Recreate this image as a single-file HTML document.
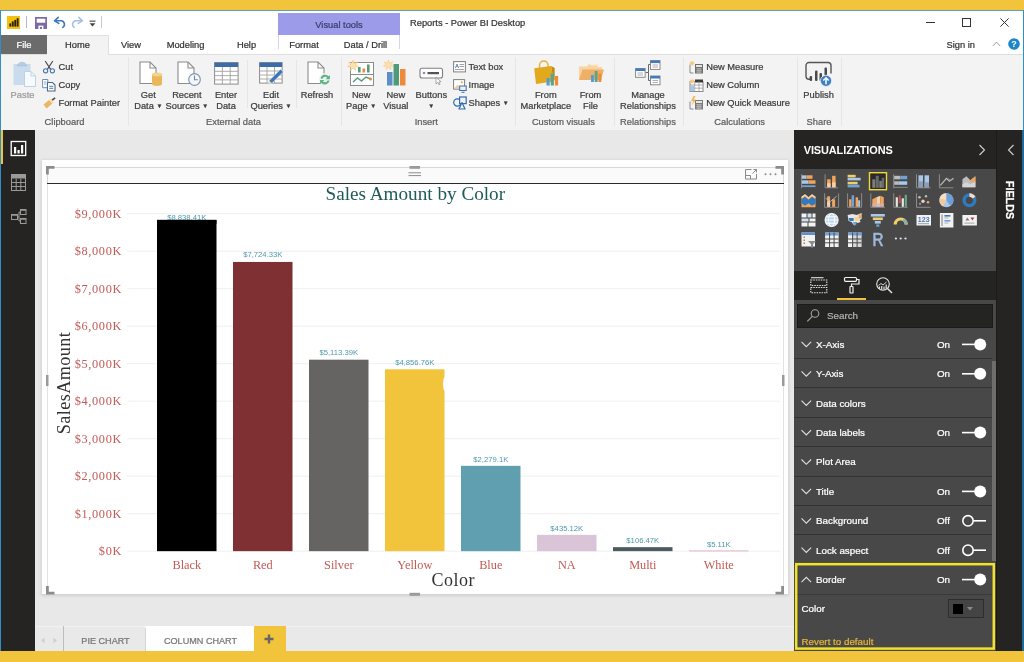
<!DOCTYPE html>
<html lang="en">
<head>
<meta charset="utf-8">
<title>Reports - Power BI Desktop</title>
<style>
*{box-sizing:border-box;margin:0;padding:0}
html,body{width:1024px;height:662px;overflow:hidden;background:#f2c43c}
body{font-family:"Liberation Sans",sans-serif;font-size:9.3px;color:#333;position:relative}
div,span,svg{position:absolute}
.t{white-space:nowrap;line-height:12px;height:12px;-webkit-text-stroke:.22px currentColor}
.c{transform:translateX(-50%);text-align:center}
.sep{width:1px;background:#e6e6e6}
.rt{color:#3b3b3b}
.gl{color:#5c5c5c}
.serif{font-family:"Liberation Serif",serif}
</style>
</head>
<body>
<div id="root" style="left:0;top:0;width:1024px;height:662px;will-change:transform">
<!-- window frame -->
<div id="white" style="left:0;top:10px;width:1024px;height:641px;background:#fff"></div>
<div style="left:0;top:10px;width:1024px;height:1px;background:#5aa0c0"></div>
<div style="left:0;top:10px;width:1.300px;height:641px;background:#2f8fc6"></div>
<div style="left:1022.500px;top:10px;width:1.500px;height:641px;background:#2f8fc6"></div>

<!-- TITLEBAR -->
<!-- TABS -->
<!-- RIBBON -->
<div id="ribbon" style="left:1px;top:54px;width:1022px;height:76px;background:#f3f3f3;border-top:1px solid #dedede"></div>

<!-- title bar content -->
<svg style="left:7px;top:16px" width="13" height="13" viewBox="0 0 13 13"><rect width="13" height="13" fill="#f2c20f"/><rect x="2.300" y="7.400" width="1.900" height="3.200" fill="#2e2103"/><rect x="4.800" y="5.400" width="1.900" height="5.200" fill="#2e2103"/><rect x="7.300" y="3.900" width="1.900" height="6.700" fill="#2e2103"/><rect x="9.700" y="2.200" width="1.900" height="8.400" fill="#2e2103"/></svg>
<div style="left:26px;top:16px;width:1px;height:12px;background:#b9b5d4"></div>
<svg style="left:35px;top:17px" width="12" height="12" viewBox="0 0 12 12"><rect x="0" y="0" width="12" height="12" fill="#7b68a6"/><rect x="1.700" y="1.700" width="8.600" height="4" fill="#fff"/><rect x="3.400" y="8.600" width="5" height="3.400" fill="#fff"/><rect x="4.900" y="9.900" width="2" height="2.100" fill="#7b68a6"/></svg>
<svg style="left:53px;top:16px" width="14" height="13" viewBox="0 0 14 13"><path d="M5.2 1.4L1.6 4.8l4.2 2.6" fill="none" stroke="#3d78b8" stroke-width="1.6" stroke-linecap="round" stroke-linejoin="round"/><path d="M2 4.8h6.2a3.6 3.6 0 0 1 1.6 6.6" fill="none" stroke="#3d78b8" stroke-width="1.6" stroke-linecap="round"/></svg>
<svg style="left:70px;top:16px" width="14" height="13" viewBox="0 0 14 13"><path d="M8.8 1.4l3.6 3.4-4.2 2.6" fill="none" stroke="#a3c0e2" stroke-width="1.5" stroke-linecap="round" stroke-linejoin="round"/><path d="M12 4.8H5.8a3.6 3.6 0 0 0-1.6 6.6" fill="none" stroke="#a3c0e2" stroke-width="1.5" stroke-linecap="round"/></svg>
<svg style="left:89px;top:20px" width="7" height="7" viewBox="0 0 7 7"><rect x="0.5" y="0.6" width="6" height="1.1" fill="#444"/><path d="M0.6 3.2h5.8L3.5 6.4z" fill="#444"/></svg>
<div style="left:101px;top:16px;width:1px;height:12px;background:#c9c9c9"></div>
<div style="left:278px;top:13px;width:122px;height:22px;background:#9b9be9"></div>
<div style="left:278px;top:35px;width:122px;height:13.500px;border-left:1px solid #d4d4f0;border-right:1px solid #d4d4f0;background:#fff"></div>
<span class="t c" style="left:339px;top:19px;color:#3b3b6a">Visual tools</span>
<span class="t" style="left:410px;top:17px;color:#333">Reports - Power BI Desktop</span>
<div style="left:926px;top:22px;width:9px;height:1px;background:#333"></div>
<div style="left:962px;top:18px;width:9px;height:9px;border:1px solid #333"></div>
<svg style="left:1000px;top:18px" width="9" height="9" viewBox="0 0 9 9"><path d="M0.4 0.4l8.2 8.2M8.6 0.4L0.4 8.6" stroke="#333" stroke-width="1"/></svg>
<!-- tab row -->
<div style="left:1px;top:35px;width:46px;height:19px;background:#6b6b6b"></div>
<span class="t c" style="left:24px;top:39px;color:#fff">File</span>
<div style="left:47px;top:35px;width:62px;height:20px;background:#f3f3f3;border:1px solid #e0e0e0;border-bottom:none;border-left:none"></div>
<span class="t c" style="left:77.5px;top:39px;color:#333">Home</span>
<span class="t c" style="left:131px;top:39px;color:#333">View</span>
<span class="t c" style="left:185.5px;top:39px;color:#333">Modeling</span>
<span class="t c" style="left:246.5px;top:39px;color:#333">Help</span>
<span class="t c" style="left:304px;top:39px;color:#333">Format</span>
<span class="t c" style="left:365.5px;top:39px;color:#333">Data / Drill</span>
<span class="t" style="left:946.5px;top:39px;color:#333">Sign in</span>
<svg style="left:992px;top:41px" width="9" height="6" viewBox="0 0 9 6"><path d="M0.8 5L4.5 1.2 8.2 5" fill="none" stroke="#9a9a9a" stroke-width="1"/></svg>
<svg style="left:1008px;top:38px" width="12" height="12" viewBox="0 0 12 12"><circle cx="6" cy="6" r="5.8" fill="#1e86c8"/><text x="6" y="9.3" font-size="9" font-weight="bold" font-family="Liberation Sans,sans-serif" fill="#fff" text-anchor="middle">?</text></svg>
<!-- ribbon content -->
<!-- Clipboard -->
<svg style="left:13px;top:61px" width="24" height="27" viewBox="0 0 24 27"><rect x="0.5" y="3" width="17" height="21" fill="#c9dbec"/><path d="M5 3c0-1 .8-1.6 2-1.600 .3-1 3.700-1 4 0 1.200 0 2 .6 2 1.600z" fill="#b5cce2"/><rect x="4" y="3.400" width="10" height="1.800" fill="#a9c3dc"/><path d="M11.500 10.500h6.500l4.500 4.500v10.500h-11z" fill="#f7fafd" stroke="#bdd2e6" stroke-width="1"/><path d="M18 10.500v4.500h4.500" fill="none" stroke="#bdd2e6" stroke-width="1"/></svg>
<span class="t c" style="left:22.500px;top:89px;color:#9a9a9a">Paste</span>
<svg style="left:42px;top:60px" width="14" height="14" viewBox="0 0 14 14"><path d="M3.200 1l5.600 8.600M10.800 1L5.200 9.600" stroke="#4f4f4f" stroke-width="1.200" fill="none"/><circle cx="3.600" cy="10.800" r="2.100" fill="none" stroke="#4878b0" stroke-width="1.100"/><circle cx="10.400" cy="10.800" r="2.100" fill="none" stroke="#4878b0" stroke-width="1.100"/></svg>
<span class="t rt" style="left:58.500px;top:61px">Cut</span>
<svg style="left:42px;top:78px" width="14" height="14" viewBox="0 0 14 14"><path d="M.6 1.500h5.200v8.200H.6z" fill="#fff" stroke="#6f8fb0" stroke-width="1"/><path d="M2 4h2.400M2 6h2.400" stroke="#6f8fb0" stroke-width=".8"/><path d="M5.500 4.500h5l2.500 2.500v6h-7.500z" fill="#fff" stroke="#48698c" stroke-width="1.100"/><path d="M7.300 8.300h4M7.300 10.300h4" stroke="#48698c" stroke-width=".9"/></svg>
<span class="t rt" style="left:58.500px;top:79px">Copy</span>
<svg style="left:42px;top:96px" width="15" height="14" viewBox="0 0 15 14"><path d="M1.500 8.500L7 4l3.200 3.800-5.700 4.600z" fill="#ecb667"/><path d="M7 4l1.600-1.300 3.200 3.800-1.600 1.300z" fill="#f4d9a8"/><path d="M9.600 3.600l3-2.400 1 1.200-3 2.400z" fill="#4a4a4a"/></svg>
<span class="t rt" style="left:58.500px;top:97px">Format Painter</span>
<span class="t c gl" style="left:64.500px;top:115.700px">Clipboard</span>
<div class="sep" style="left:128px;top:57px;height:69px"></div>
<!-- External data -->
<svg style="left:139px;top:61px" width="24" height="26" viewBox="0 0 24 26"><path d="M1 1h10l6 6v15.500H1z" fill="#fff" stroke="#8c8c8c" stroke-width="1.100"/><path d="M11 1v6h6" fill="none" stroke="#8c8c8c" stroke-width="1.100"/><path d="M13 13.500v9.500c0 1.300 2.200 2 5 2s5-.7 5-2v-9.500z" fill="#e9b85a"/><ellipse cx="18" cy="13.500" rx="5" ry="1.900" fill="#f3d28c"/></svg>
<span class="t c rt" style="left:148.300px;top:89px">Get</span>
<span class="t c rt" style="left:148.300px;top:99.600px">Data <span style="position:static;font-size:6px;vertical-align:1px">&#9660;</span></span>
<svg style="left:177px;top:61px" width="25" height="26" viewBox="0 0 25 26"><path d="M1 1h10l6 6v15.500H1z" fill="#fff" stroke="#8c8c8c" stroke-width="1.100"/><path d="M11 1v6h6" fill="none" stroke="#8c8c8c" stroke-width="1.100"/><circle cx="17.500" cy="18.500" r="5.800" fill="#f6f8fb" stroke="#8097b2" stroke-width="1.200"/><path d="M17.500 14.500v4.200h3.300" fill="none" stroke="#6f88a6" stroke-width="1.100"/></svg>
<span class="t c rt" style="left:186.900px;top:89px">Recent</span>
<span class="t c rt" style="left:186.900px;top:99.600px">Sources <span style="position:static;font-size:6px;vertical-align:1px">&#9660;</span></span>
<svg style="left:214px;top:62px" width="25" height="23" viewBox="0 0 25 23"><rect x=".6" y=".6" width="23.500" height="21.500" fill="#fff" stroke="#8c8c8c" stroke-width="1"/><rect x=".6" y=".6" width="23.500" height="4.400" fill="#3d6da6"/><path d="M.6 9.300h23.500M.6 13.600h23.500M.6 17.900h23.500M8.400 5v17M16.200 5v17" stroke="#a2a2a2" stroke-width=".9"/></svg>
<span class="t c rt" style="left:226px;top:89px">Enter</span>
<span class="t c rt" style="left:226px;top:99.600px">Data</span>
<div class="sep" style="left:247px;top:60px;height:48px"></div>
<svg style="left:259px;top:62px" width="26" height="25" viewBox="0 0 26 25"><rect x=".6" y=".6" width="22.500" height="20.500" fill="#fff" stroke="#8c8c8c" stroke-width="1"/><rect x=".6" y=".6" width="22.500" height="4.400" fill="#3d6da6"/><path d="M.6 9h22.500M.6 13h22.500M.6 17h22.500M8 5v16M15.500 5v16" stroke="#a2a2a2" stroke-width=".9"/><path d="M9 22.500l1.200-4L21.500 7.200l2.800 2.800L13 21.300z" fill="#3e76ba" stroke="#f3f3f3" stroke-width=".6"/><path d="M9 22.500l1.200-4 2.800 2.800z" fill="#f0d9a8"/></svg>
<span class="t c rt" style="left:271px;top:89px">Edit</span>
<span class="t c rt" style="left:271px;top:99.600px">Queries <span style="position:static;font-size:6px;vertical-align:1px">&#9660;</span></span>
<div class="sep" style="left:296px;top:60px;height:48px"></div>
<svg style="left:307px;top:61px" width="25" height="26" viewBox="0 0 25 26"><path d="M1 1h10l6 6v15.500H1z" fill="#fff" stroke="#8c8c8c" stroke-width="1.100"/><path d="M11 1v6h6" fill="none" stroke="#8c8c8c" stroke-width="1.100"/><circle cx="18" cy="18.500" r="6.300" fill="#f3f3f3"/><path d="M13.400 17.500a4.800 4.800 0 0 1 8.200-2.300l1.300-1.300v4.300h-4.300l1.500-1.500a2.800 2.800 0 0 0-4.600 1z" fill="#5cb585"/><path d="M22.600 19.600a4.800 4.800 0 0 1-8.200 2.300l-1.300 1.300v-4.300h4.300l-1.500 1.500a2.800 2.800 0 0 0 4.600-1z" fill="#5cb585"/></svg>
<span class="t c rt" style="left:317px;top:89px">Refresh</span>
<span class="t c gl" style="left:233.500px;top:115.700px">External data</span>
<div class="sep" style="left:341px;top:57px;height:69px"></div>
<!-- Insert -->
<svg style="left:347px;top:59px" width="28" height="28" viewBox="0 0 28 28"><rect x="3.500" y="3.500" width="23" height="23" fill="#fff" stroke="#8c8c8c" stroke-width="1"/><path d="M3.500 15.500h23" stroke="#8c8c8c" stroke-width="1"/><rect x="11" y="8" width="2.600" height="5.500" fill="#5a9a78"/><rect x="15.500" y="9.500" width="2.600" height="4" fill="#ee8a3c"/><rect x="20" y="5.500" width="2.600" height="8" fill="#5a9a78"/><path d="M6 23l4.500-4 4 3 4.500-4 4.500 2" fill="none" stroke="#5a9a78" stroke-width="1.400"/><circle cx="23.500" cy="20" r="1.500" fill="#ee8a3c"/><path d="M6 1l1.200 3.200L10.500 3 8.600 5.800 11.500 7.500 8.200 8 8.500 11.500 6 9 3.500 11.500 3.800 8 .5 7.500 3.400 5.800 1.500 3 4.800 4.200z" fill="#fbe0b0" stroke="#f3c27a" stroke-width=".5"/></svg>
<span class="t c rt" style="left:361.200px;top:89px">New</span>
<span class="t c rt" style="left:361.200px;top:99.600px">Page <span style="position:static;font-size:6px;vertical-align:1px">&#9660;</span></span>
<svg style="left:383px;top:59px" width="24" height="28" viewBox="0 0 24 28"><rect x="4" y="13" width="5.500" height="13.500" fill="#5b8fc9"/><rect x="10.500" y="5" width="5.500" height="21.500" fill="#4e9a7a"/><rect x="17" y="10" width="5.500" height="16.500" fill="#ee8a3c"/><path d="M5.500 1l1.100 3L9.700 2.900 8 5.500 10.600 7 7.600 7.500 7.900 10.700 5.500 8.400 3.100 10.700 3.400 7.500 .4 7 3 5.500 1.300 2.900 4.400 4z" fill="#fbe0b0" stroke="#f3c27a" stroke-width=".5"/></svg>
<span class="t c rt" style="left:395.800px;top:89px">New</span>
<span class="t c rt" style="left:395.800px;top:99.600px">Visual</span>
<svg style="left:419px;top:67px" width="26" height="18" viewBox="0 0 26 18"><rect x="1" y="1.200" width="22.500" height="9.800" rx="2" fill="#fff" stroke="#7f7f7f" stroke-width="1.100"/><circle cx="5" cy="6" r="1.300" fill="#7f95b5"/><rect x="8.500" y="5" width="11.500" height="2.200" fill="#555"/><path d="M17 10.500l0 6.500 1.800-1.600 1.300 2.400 1-.5-1.300-2.300 2.300-.3z" fill="#fff" stroke="#8a8a8a" stroke-width=".7"/></svg>
<span class="t c rt" style="left:431.300px;top:89px">Buttons</span>
<span class="t c rt" style="left:431.300px;top:99.600px;font-size:6px">&#9660;</span>
<svg style="left:453px;top:61px" width="13" height="12" viewBox="0 0 13 12"><rect x=".6" y=".6" width="11.800" height="10.300" fill="#fff" stroke="#7f7f7f" stroke-width="1"/><text x="2" y="6.500" font-size="5.500" font-weight="bold" font-family="Liberation Sans,sans-serif" fill="#3d6da6">A</text><path d="M6.500 3.500h4.500M6.500 5.500h4.500M2 8.500h9" stroke="#8a8a8a" stroke-width=".8"/></svg>
<span class="t rt" style="left:468.600px;top:61px">Text box</span>
<svg style="left:453px;top:79px" width="14" height="14" viewBox="0 0 14 14"><rect x=".6" y=".6" width="11" height="9.500" fill="#fff" stroke="#7f7f7f" stroke-width="1"/><path d="M1.500 9l3-3.500 2.500 2.500 1.500-1.500 2.500 2.500z" fill="#f3c9a0"/><circle cx="8.800" cy="3.300" r="1.100" fill="#f0a848"/><rect x="6.700" y="7" width="6.500" height="4.500" fill="#e8f0fa" stroke="#3d6da6" stroke-width="1"/><path d="M8.500 13.300h3" stroke="#3d6da6" stroke-width="1"/></svg>
<span class="t rt" style="left:468.600px;top:79px">Image</span>
<svg style="left:453px;top:96px" width="14" height="14" viewBox="0 0 14 14"><circle cx="4.300" cy="6.500" r="3.600" fill="#f3f3f3" stroke="#2f6cb0" stroke-width="1.200"/><rect x="6.600" y="1" width="6.600" height="6.600" fill="#f3f3f3" stroke="#2f6cb0" stroke-width="1.200"/><path d="M9 6.500l3 6.500H6z" fill="#f3f3f3" stroke="#2f6cb0" stroke-width="1.200" stroke-linejoin="round"/></svg>
<span class="t rt" style="left:468.600px;top:97px">Shapes <span style="position:static;font-size:6px;vertical-align:1px">&#9660;</span></span>
<span class="t c gl" style="left:426.300px;top:115.700px">Insert</span>
<div class="sep" style="left:515px;top:57px;height:69px"></div>
<!-- Custom visuals -->
<svg style="left:533px;top:59px" width="27" height="29" viewBox="0 0 27 29"><path d="M6.500 9.500V6.200a4.300 4.300 0 0 1 8.600 0V9.500" fill="none" stroke="#e6b43a" stroke-width="1.500"/><path d="M1.200 9.300l17-2.300 2.300 15.500L3 25z" fill="#e2a91c"/><path d="M18.200 7l2.300 15.500 1.200-1.700V9z" fill="#c28c10"/><rect x="13.500" y="19" width="3.200" height="7.500" fill="#5b9bd5"/><rect x="17.700" y="14.500" width="3.200" height="12" fill="#5aa587"/><rect x="21.900" y="17" width="3.200" height="9.500" fill="#ee8a3c"/></svg>
<span class="t c rt" style="left:545.800px;top:89px">From</span>
<span class="t c rt" style="left:545.800px;top:99.600px">Marketplace</span>
<svg style="left:578px;top:63px" width="27" height="21" viewBox="0 0 27 21"><path d="M1 3.500h8l2-2.500h9.500v3H24v13H1z" fill="#f6d5a2"/><path d="M1 17l3.500-10.500H26L23 17z" fill="#eeb065"/><path d="M12 1.800h8v2" fill="none" stroke="#fff" stroke-width=".8"/><rect x="13" y="12" width="2.900" height="7" fill="#5b9bd5"/><rect x="16.700" y="8" width="2.900" height="11" fill="#5aa587"/><rect x="20.400" y="10.500" width="2.900" height="8.500" fill="#ee8a3c"/></svg>
<span class="t c rt" style="left:590.500px;top:89px">From</span>
<span class="t c rt" style="left:590.500px;top:99.600px">File</span>
<span class="t c gl" style="left:563.400px;top:115.700px">Custom visuals</span>
<div class="sep" style="left:614px;top:57px;height:69px"></div>
<!-- Relationships -->
<svg style="left:635px;top:60px" width="26" height="26" viewBox="0 0 26 26"><path d="M10.500 12.500h3v-8h3M13.500 12.500v8h3" fill="none" stroke="#6a6a6a" stroke-width="1"/><rect x="15.500" y=".6" width="9.500" height="8.800" fill="#fff" stroke="#7f7f7f" stroke-width=".9"/><rect x="15.500" y=".6" width="9.500" height="2.500" fill="#3d7cc2"/><path d="M17.500 5h5.500M17.500 7h5.500" stroke="#9a9a9a" stroke-width=".8"/><rect x=".6" y="8.500" width="9.500" height="8.800" fill="#fff" stroke="#7f7f7f" stroke-width=".9"/><rect x=".6" y="8.500" width="9.500" height="2.500" fill="#3d7cc2"/><path d="M2.500 13h5.500M2.500 15h5.500" stroke="#9a9a9a" stroke-width=".8"/><rect x="15.500" y="16" width="9.500" height="8.800" fill="#fff" stroke="#7f7f7f" stroke-width=".9"/><rect x="15.500" y="16" width="9.500" height="2.500" fill="#3d7cc2"/><path d="M17.500 20.500h5.500M17.500 22.500h5.500" stroke="#9a9a9a" stroke-width=".8"/></svg>
<span class="t c rt" style="left:648px;top:89px">Manage</span>
<span class="t c rt" style="left:648px;top:99.600px">Relationships</span>
<span class="t c gl" style="left:648px;top:115.700px">Relationships</span>
<div class="sep" style="left:683px;top:57px;height:69px"></div>
<!-- Calculations -->
<svg style="left:689px;top:60px" width="15" height="14" viewBox="0 0 15 14"><path d="M1 4.500v8.500h3.500" fill="none" stroke="#8a8a8a" stroke-width="1"/><rect x="6" y="4" width="8" height="9.500" fill="#6f6f6f"/><rect x="7" y="5" width="6" height="2" fill="#e6e6e6"/><path d="M7.200 8.700h5.600M7.200 10.400h5.600M7.200 12.100h5.600M9 8v5M11 8v5" stroke="#d0d0d0" stroke-width=".6"/><path d="M3 .3l.7 1.700 1.800-.5-1 1.500 1.500 1-1.800 .3.200 1.800L3 4.800 1.600 6.100l.2-1.800L0 4l1.500-1-1-1.500 1.800 .5z" fill="#f7c879"/></svg>
<span class="t rt" style="left:706.200px;top:61px">New Measure</span>
<svg style="left:689px;top:78px" width="15" height="14" viewBox="0 0 15 14"><rect x="1" y="3.500" width="13" height="10" fill="#fff" stroke="#8a8a8a" stroke-width="1"/><rect x="6" y="1.500" width="8" height="3" fill="#3a3a3a"/><path d="M1 7h13M1 10.200h13M5.700 3.500v10M10 3.500v10" stroke="#9a9a9a" stroke-width=".8"/><rect x="1.500" y="7.500" width="4" height="5.700" fill="#a9c6e6"/><path d="M3 .3l.7 1.700 1.800-.5-1 1.500 1.500 1-1.800 .3.200 1.800L3 4.800 1.600 6.100l.2-1.800L0 4l1.500-1-1-1.500 1.800 .5z" fill="#f7c879"/></svg>
<span class="t rt" style="left:706.200px;top:79px">New Column</span>
<svg style="left:689px;top:96px" width="15" height="14" viewBox="0 0 15 14"><path d="M1 5.500v7.500h3.500" fill="none" stroke="#8a8a8a" stroke-width="1"/><rect x="6" y="4" width="8" height="9.500" fill="#7a7a7a"/><rect x="7" y="5" width="6" height="2" fill="#e6e6e6"/><path d="M7.200 8.700h5.600M7.200 10.400h5.600M7.200 12.100h5.600M9 8v5M11 8v5" stroke="#d0d0d0" stroke-width=".6"/><path d="M4.500 0L2 5h2L3 9l4-5.500H4.800L6.500 0z" fill="#f2b95c"/></svg>
<span class="t rt" style="left:706.200px;top:97px">New Quick Measure</span>
<span class="t c gl" style="left:739.700px;top:115.700px">Calculations</span>
<div class="sep" style="left:797px;top:57px;height:69px"></div>
<!-- Share -->
<svg style="left:805px;top:61px" width="28" height="28" viewBox="0 0 28 28"><path d="M5 18.200H4a3 3 0 0 1-3-3V4.500a3 3 0 0 1 3-3h19a3 3 0 0 1 3 3V12.500" fill="none" stroke="#555" stroke-width="1.400"/><rect x="4.600" y="15" width="2.500" height="5" rx="1" fill="#4a4a4a"/><rect x="10" y="9.600" width="2.500" height="10.400" rx="1" fill="#4a4a4a"/><rect x="14.500" y="11.900" width="2.500" height="8.100" rx="1" fill="#4a4a4a"/><rect x="19.500" y="6.400" width="2.500" height="11" rx="1" fill="#4a4a4a"/><circle cx="21" cy="19.800" r="5.600" fill="#3b82c4" stroke="#f3f3f3" stroke-width=".8"/><path d="M21 23.300v-6.300M18.300 19.500l2.700-2.700 2.700 2.700" fill="none" stroke="#fff" stroke-width="1.500"/></svg>
<span class="t c rt" style="left:818.600px;top:89px">Publish</span>
<span class="t c gl" style="left:819px;top:115.700px">Share</span>
<div class="sep" style="left:841px;top:57px;height:69px"></div>
<!-- SIDE -->
<div id="side" style="left:1px;top:130px;width:34px;height:521px;background:#252423"></div>
<!-- WORK -->
<div id="work" style="left:35px;top:130px;width:759px;height:496px;background:#e8e8e8"></div>
<!-- chart -->
<div style="left:42px;top:160px;width:746px;height:434px;background:#fff;box-shadow:0 1px 3px 1px rgba(0,0,0,.10)"></div>
<div style="left:47px;top:167px;width:737px;height:17px;background:#fafafa;border:1px solid #d8d8d8;border-bottom:none"></div>
<div style="left:47px;top:183px;width:737px;height:411px;border-left:1px solid #e2e2e2;border-right:1px solid #e2e2e2"></div>
<div style="left:47px;top:183px;width:737px;height:1px;background:#2a2a2a"></div>
<svg style="left:0;top:0" width="1024" height="662" viewBox="0 0 1024 662">
<g fill="none" stroke="#8c8c8c" stroke-width="2.800"><path d="M47.400 174.500v-7.100h7.100"/><path d="M775.500 167.400h7.100v7.100"/><path d="M47.400 586v7.100h7.100"/><path d="M775.500 593.100h7.100v-7.100"/></g>
<g fill="#9a9a9a"><rect x="409.500" y="166" width="10.500" height="2.800"/><rect x="409.500" y="592.800" width="10.500" height="3"/><rect x="46" y="375" width="2.500" height="11"/><rect x="782" y="375" width="2.500" height="11"/></g>
<path d="M408.500 172.800h12.500M408.500 175.600h12.500" stroke="#8a8a8a" stroke-width="1"/>
<g fill="none" stroke="#8a8a8a" stroke-width="1"><path d="M751.500 169.500h-6v9.500h11v-5"/><path d="M745.500 175.500h5v3.500"/><path d="M752.500 173.500l4-4m-3 0h3v3"/></g>
<g fill="#8a8a8a"><circle cx="765.500" cy="174.300" r="1"/><circle cx="770.500" cy="174.300" r="1"/><circle cx="775.500" cy="174.300" r="1"/></g>
<rect x="127" y="550.70" width="653" height="1" fill="#efefef"/>
<rect x="127" y="513.20" width="653" height="1" fill="#efefef"/>
<rect x="127" y="475.70" width="653" height="1" fill="#efefef"/>
<rect x="127" y="438.20" width="653" height="1" fill="#efefef"/>
<rect x="127" y="400.70" width="653" height="1" fill="#efefef"/>
<rect x="127" y="363.20" width="653" height="1" fill="#efefef"/>
<rect x="127" y="325.70" width="653" height="1" fill="#efefef"/>
<rect x="127" y="288.20" width="653" height="1" fill="#efefef"/>
<rect x="127" y="250.70" width="653" height="1" fill="#efefef"/>
<rect x="127" y="213.20" width="653" height="1" fill="#efefef"/>
<g font-family="Liberation Serif,serif" font-size="12.300" fill="#c25a56" text-anchor="end" letter-spacing=".65">
<text x="122" y="555.2">$0K</text>
<text x="122" y="517.7">$1,000K</text>
<text x="122" y="480.2">$2,000K</text>
<text x="122" y="442.7">$3,000K</text>
<text x="122" y="405.2">$4,000K</text>
<text x="122" y="367.7">$5,000K</text>
<text x="122" y="330.2">$6,000K</text>
<text x="122" y="292.7">$7,000K</text>
<text x="122" y="255.2">$8,000K</text>
<text x="122" y="217.7">$9,000K</text>
</g>
<rect x="157" y="220.24" width="59.500" height="330.91" fill="#000000"/>
<rect x="233" y="261.95" width="59.500" height="289.20" fill="#7f3033"/>
<rect x="309" y="359.70" width="59.500" height="191.45" fill="#666463"/>
<rect x="385" y="369.31" width="59.500" height="181.84" fill="#f2c43c"/>
<rect x="461" y="465.82" width="59.500" height="85.33" fill="#5f9fb0"/>
<rect x="537" y="534.86" width="59.500" height="16.29" fill="#dac4d8"/>
<rect x="613" y="547.16" width="59.500" height="3.99" fill="#4d5b60"/>
<rect x="689" y="550.400" width="59.500" height="1.100" fill="#e3bcc6"/>
<ellipse cx="445" cy="384" rx="2" ry="7" fill="#fff"/>
<g font-family="Liberation Sans,sans-serif" font-size="7.700" fill="#4e9aad" text-anchor="middle">
<text x="186.8" y="220.3">$8,838.41K</text>
<text x="262.8" y="257.3">$7,724.33K</text>
<text x="338.8" y="355.2">$5,113.39K</text>
<text x="414.8" y="364.9">$4,856.76K</text>
<text x="490.8" y="461.5">$2,279.1K</text>
<text x="566.8" y="530.7">$435.12K</text>
<text x="642.8" y="543.0">$106.47K</text>
<text x="718.8" y="546.8">$5.11K</text>
</g>
<rect x="157" y="219.800" width="59.500" height="4" fill="#000"/>
<g font-family="Liberation Serif,serif" font-size="12.300" fill="#c25a56" text-anchor="middle">
<text x="186.8" y="569">Black</text>
<text x="262.8" y="569">Red</text>
<text x="338.8" y="569">Silver</text>
<text x="414.8" y="569">Yellow</text>
<text x="490.8" y="569">Blue</text>
<text x="566.8" y="569">NA</text>
<text x="642.8" y="569">Multi</text>
<text x="718.8" y="569">White</text>
</g>
<text x="415.300" y="200" font-family="Liberation Serif,serif" font-size="19.200" fill="#1f5a5a" text-anchor="middle">Sales Amount by Color</text>
<text x="453.300" y="586" font-family="Liberation Serif,serif" font-size="18" letter-spacing=".5" fill="#333" text-anchor="middle">Color</text>
<text transform="translate(69.700,383) rotate(-90)" font-family="Liberation Serif,serif" font-size="18.200" letter-spacing=".4" fill="#333" text-anchor="middle">SalesAmount</text>
</svg>
<!-- PAGE TABS -->
<div id="ptabs" style="left:35px;top:625.500px;width:759px;height:25.500px;background:#e9e9e9;border-top:1px solid #f2f2f2"></div>
<!-- VIZ PANEL -->
<div id="viz" style="left:794px;top:130px;width:202px;height:521px;background:#484848"></div>
<!-- FIELDS -->
<div id="fields" style="left:996px;top:130px;width:26.500px;height:521px;background:#252423;border-left:1px solid #1c1b1a"></div>
<!-- viz panel content -->
<div style="left:794px;top:130px;width:202px;height:39px;background:#252423"></div>
<span class="t" style="left:803.700px;top:144px;color:#fff;font-weight:bold;font-size:10.950px;letter-spacing:-.1px;-webkit-text-stroke:0">VISUALIZATIONS</span>
<svg style="left:978.200px;top:144px" width="8" height="12" viewBox="0 0 8 12"><path d="M1.500 1l5 5-5 5" fill="none" stroke="#d0d0d0" stroke-width="1.100"/></svg>
<div style="left:794px;top:270.500px;width:202px;height:29.500px;background:#242423"></div>
<div style="left:837px;top:298.400px;width:29px;height:1.800px;background:#f2c43c"></div>
<div style="left:797px;top:303.500px;width:196px;height:24px;background:#242423;border:1px solid #1b1b1b"></div>
<svg style="left:806px;top:308px" width="15" height="15" viewBox="0 0 15 15"><circle cx="9" cy="5.500" r="3.800" fill="none" stroke="#a4a4a4" stroke-width="1.100"/><path d="M6.300 8.300L1.300 13.300" stroke="#a4a4a4" stroke-width="1.200"/></svg>
<span class="t" style="left:827px;top:310px;color:#b2b2b2;font-size:9.800px">Search</span>
<div style="left:794px;top:358px;width:198px;height:1px;background:#333"></div>
<span class="t" style="left:816px;top:338.8px;color:#fff;font-size:9.800px">X-Axis</span>
<span class="t" style="left:937px;top:338.8px;color:#fff;font-size:9.800px">On</span>
<div style="left:794px;top:387px;width:198px;height:1px;background:#333"></div>
<span class="t" style="left:816px;top:368.2px;color:#fff;font-size:9.800px">Y-Axis</span>
<span class="t" style="left:937px;top:368.2px;color:#fff;font-size:9.800px">On</span>
<div style="left:794px;top:417px;width:198px;height:1px;background:#333"></div>
<span class="t" style="left:816px;top:397.6px;color:#fff;font-size:9.800px">Data colors</span>
<div style="left:794px;top:446px;width:198px;height:1px;background:#333"></div>
<span class="t" style="left:816px;top:427.0px;color:#fff;font-size:9.800px">Data labels</span>
<span class="t" style="left:937px;top:427.0px;color:#fff;font-size:9.800px">On</span>
<div style="left:794px;top:476px;width:198px;height:1px;background:#333"></div>
<span class="t" style="left:816px;top:456.4px;color:#fff;font-size:9.800px">Plot Area</span>
<div style="left:794px;top:505px;width:198px;height:1px;background:#333"></div>
<span class="t" style="left:816px;top:485.8px;color:#fff;font-size:9.800px">Title</span>
<span class="t" style="left:937px;top:485.8px;color:#fff;font-size:9.800px">On</span>
<div style="left:794px;top:534px;width:198px;height:1px;background:#333"></div>
<span class="t" style="left:816px;top:515.2px;color:#fff;font-size:9.800px">Background</span>
<span class="t" style="left:937px;top:515.2px;color:#fff;font-size:9.800px">Off</span>
<div style="left:794px;top:564px;width:198px;height:1px;background:#333"></div>
<span class="t" style="left:816px;top:544.6px;color:#fff;font-size:9.800px">Lock aspect</span>
<span class="t" style="left:937px;top:544.6px;color:#fff;font-size:9.800px">Off</span>
<span class="t" style="left:816px;top:574.0px;color:#fff;font-size:9.800px">Border</span>
<span class="t" style="left:937px;top:574.0px;color:#fff;font-size:9.800px">On</span>

<div style="left:991.500px;top:361px;width:4px;height:200px;background:#6e6e6e"></div>
<svg style="left:0;top:0" width="1024" height="662" viewBox="0 0 1024 662">
<g transform="translate(800.5,173.3)"><rect x="1" y="2" width="5" height="3.500" fill="#a9c8ea"/><rect x="6" y="2" width="6" height="3.500" fill="#f2a45a"/><rect x="1" y="7" width="7" height="3.500" fill="#a9c8ea"/><rect x="8" y="7" width="7" height="3.500" fill="#f2a45a"/><rect x="1" y="12" width="14" height="1.800" fill="#6fa3d8"/><rect x=".5" y="1" width="1" height="14" fill="#8c8c8c"/></g>
<g transform="translate(823.6,173.3)"><path d="M1.500 1v13.500h13" fill="none" stroke="#8c8c8c" stroke-width="1"/><rect x="3.500" y="6" width="3.500" height="8" fill="#f2a45a"/><rect x="8.500" y="2.500" width="3.500" height="11.500" fill="#f2a45a"/><rect x="3.500" y="10" width="3.500" height="4" fill="#f7cfa8"/><rect x="8.500" y="9" width="3.500" height="5" fill="#f7cfa8"/></g>
<g transform="translate(846.6,173.3)"><rect x="1" y="1.500" width="8" height="2.600" fill="#f0cf6a"/><rect x="1" y="4.500" width="13" height="2.600" fill="#a9c8ea"/><rect x="1" y="8.500" width="10" height="2.600" fill="#f0cf6a"/><rect x="1" y="11.500" width="12" height="2.600" fill="#6fa3d8"/></g>
<rect x="869.500" y="172.700" width="17" height="17" fill="#2b2b2b" stroke="#f0d83a" stroke-width="1.400"/><g transform="translate(869.8,173.3)"><rect x="2.500" y="6" width="3" height="8.500" fill="#7d7d7d"/><rect x="6" y="2.500" width="3" height="12" fill="#6a6a6a"/><rect x="9.500" y="7.500" width="2.600" height="7" fill="#7d7d7d"/><rect x="12" y="4.500" width="2.400" height="10" fill="#6a6a6a"/></g>
<g transform="translate(892.7,173.3)"><rect x=".5" y="1" width="1" height="14" fill="#8c8c8c"/><rect x="1.500" y="2.500" width="6" height="3.500" fill="#bdbdbd"/><rect x="7.500" y="2.500" width="7" height="3.500" fill="#6fa3d8"/><rect x="1.500" y="8" width="4" height="3.500" fill="#bdbdbd"/><rect x="5.500" y="8" width="9" height="3.500" fill="#a9c8ea"/><rect x="1" y="13.500" width="14" height="1" fill="#8c8c8c"/></g>
<g transform="translate(915.5,173.3)"><path d="M1 1v13.500h14" fill="none" stroke="#8c8c8c" stroke-width="1"/><rect x="3" y="2" width="4.500" height="12" fill="#a9c8ea"/><rect x="9" y="2" width="4.500" height="12" fill="#a9c8ea"/><rect x="3" y="8" width="4.500" height="6" fill="#8c9db5"/><rect x="9" y="9" width="4.500" height="5" fill="#8c9db5"/></g>
<g transform="translate(938.4,173.3)"><path d="M1 1v13.500h14" fill="none" stroke="#8c8c8c" stroke-width="1"/><path d="M2 12l6-7 3 3 4-3" fill="none" stroke="#bdbdbd" stroke-width="1.200"/><path d="M9 5l3 2 3-1" fill="none" stroke="#999" stroke-width="1"/></g>
<g transform="translate(961.4,173.3)"><path d="M1 14V6l4-3 4 4 5-4v11z" fill="#bdbdbd"/><path d="M8 7l1 0 5-4v5l-3 2z" fill="#f2a45a"/><path d="M1 14v-3l4-2 4 2 5-3v6z" fill="#d5d5d5"/></g>
<g transform="translate(800.5,192.3)"><path d="M1 15V4.500l3.500-2.500L8 5l3.500-3L15 4.500V15z" fill="#f2a45a"/><path d="M1 7l3.500-2.500L8 7.500l3.500-3L15 7v4.500l-3.500 2L8 11l-3.500 2.500L1 11z" fill="#2f7bc0"/><path d="M1 4.500l3.500-2.500L8 5l3.500-3L15 4.500V6l-3.500-2.500L8 6.500 4.500 3.500 1 6z" fill="#f9d9b8"/></g>
<g transform="translate(823.6,192.3)"><path d="M1 1v14h14V1" fill="none" stroke="#8c8c8c" stroke-width="1"/><rect x="3.500" y="4" width="3" height="10.500" fill="#f2a45a"/><rect x="8.500" y="7" width="3" height="7.500" fill="#f2a45a"/><rect x="3.500" y="9" width="3" height="5.500" fill="#f7cfa8"/><path d="M2 6l5 3 6-5" fill="none" stroke="#c8c8c8" stroke-width=".8"/></g>
<g transform="translate(846.6,192.3)"><path d="M1 1v14h14V1" fill="none" stroke="#8c8c8c" stroke-width="1"/><rect x="2.500" y="7" width="2.500" height="7.500" fill="#f2a45a"/><rect x="5" y="3" width="2.500" height="11.500" fill="#6fa3d8"/><rect x="9" y="5" width="2.500" height="9.500" fill="#f2a45a"/><rect x="11.500" y="8" width="2" height="6.500" fill="#a9c8ea"/></g>
<g transform="translate(869.8,192.3)"><path d="M1 1v14h14" fill="none" stroke="#8c8c8c" stroke-width="1"/><path d="M2.500 14.500V7l4-2v9.500z" fill="#f2a45a"/><path d="M6.500 14.500V5l4-1.500v11z" fill="#f7cfa8"/><path d="M10.500 14.500V3.500L14 5v9.500z" fill="#f2a45a"/><rect x="2.500" y="11" width="11.500" height="3.500" fill="#c9b5c8" opacity=".7"/></g>
<g transform="translate(892.7,192.3)"><path d="M1 1v14h14" fill="none" stroke="#8c8c8c" stroke-width="1"/><rect x="3" y="5" width="2.200" height="9.500" fill="#e6e6e6"/><rect x="6" y="3" width="2.200" height="8" fill="#c0504d"/><rect x="9" y="6" width="2.200" height="8.500" fill="#e6e6e6"/><rect x="12" y="2.500" width="2.200" height="12" fill="#6aa88a"/></g>
<g transform="translate(915.5,192.3)"><path d="M1 1v14h14" fill="none" stroke="#8c8c8c" stroke-width="1"/><circle cx="4" cy="5" r="1.300" fill="#bdbdbd"/><circle cx="7.500" cy="9" r="1.700" fill="#f2d0b8"/><circle cx="10.500" cy="4" r="1.200" fill="#bdbdbd"/><circle cx="12.500" cy="10" r="1.300" fill="#d8a890"/><circle cx="4.500" cy="11.500" r="1.100" fill="#999"/></g>
<g transform="translate(938.4,192.3)"><circle cx="8" cy="8" r="7" fill="#a9c8ea"/><path d="M8 8V1a7 7 0 0 0-6.800 5.500z" fill="#f7dcc0"/><path d="M8 8L1.200 6.500a7 7 0 0 0 3.500 7.700z" fill="#f2c8a0"/><path d="M8 8V1a7 7 0 0 1 4 12.700z" fill="#6f9fd8"/></g>
<g transform="translate(961.4,192.3)"><circle cx="8" cy="8" r="5.300" fill="none" stroke="#2f7bc0" stroke-width="3.400"/><path d="M8 2.700a5.300 5.300 0 0 1 4.600 2.700" fill="none" stroke="#f7dcc0" stroke-width="3.400"/></g>
<g transform="translate(800.5,212.0)"><rect x="1" y="1.500" width="5" height="4" fill="#f2f2f2"/><rect x="7" y="1.500" width="4" height="4" fill="#cfdff2"/><rect x="12" y="1.500" width="3" height="4" fill="#f2f2f2"/><rect x="1" y="6.500" width="7" height="3" fill="#cfdff2"/><rect x="9" y="6.500" width="6" height="3" fill="#f2f2f2"/><rect x="1" y="10.500" width="6" height="4" fill="#f2f2f2"/><rect x="8" y="10.500" width="7" height="4" fill="#f2f2f2"/></g>
<g transform="translate(823.6,212.0)"><circle cx="8" cy="8" r="6.500" fill="#bdd7ef" stroke="#f2f2f2" stroke-width="1.200"/><ellipse cx="8" cy="8" rx="3" ry="6.500" fill="none" stroke="#fff" stroke-width="1"/><path d="M1.500 8h13M2.500 4.800h11M2.500 11.200h11" stroke="#fff" stroke-width="1"/></g>
<g transform="translate(846.6,212.0)"><path d="M1 3l5-1 4 1 5-2v6l-2 1 1 2-3 1-2-1-2 3-2-3-3-1z" fill="#e8e8e8"/><path d="M2 6h5v3H3z" fill="#2f7bc0"/><path d="M8 5h4v4H8z" fill="#f2d890"/><path d="M6 10l3 0 1 2-2 2z" fill="#6fa3d8"/><path d="M12 2.500h2.500v4H12z" fill="#f2a45a"/></g>
<g transform="translate(869.8,212.0)"><rect x="1" y="2" width="14" height="2.600" fill="#a9c8ea"/><rect x="3" y="5.500" width="10" height="2.600" fill="#f0cf6a"/><rect x="5" y="9" width="6" height="2.600" fill="#a9c8ea"/><rect x="6.500" y="12.500" width="3" height="2.200" fill="#6fa3d8"/></g>
<g transform="translate(892.7,212.0)"><path d="M2.500 12.500a5.500 5.500 0 0 1 11 0" fill="none" stroke="#f0cf6a" stroke-width="3.200"/><path d="M10.500 7.600a5.500 5.500 0 0 1 3 4.900" fill="none" stroke="#8cb0a8" stroke-width="3.200"/></g>
<g transform="translate(915.5,212.0)"><rect x="1" y="3" width="14.500" height="10.500" fill="#f2f2f2"/><text x="8.200" y="9.800" font-family="Liberation Sans,sans-serif" font-size="7" font-weight="bold" fill="#4a78b5" text-anchor="middle">123</text><rect x="2.500" y="11" width="11" height="1.200" fill="#b0b0b0"/></g>
<g transform="translate(938.4,212.0)"><rect x="1.500" y="1" width="13.500" height="14.500" fill="#f2f2f2"/><rect x="3" y="2.500" width="1.300" height="11.500" fill="#9a9a9a"/><rect x="6" y="3" width="6" height="1.600" fill="#4a78b5"/><rect x="6" y="5.500" width="4" height="1" fill="#b0b0b0"/><rect x="6" y="8" width="6" height="1.600" fill="#6f9fd8"/><rect x="6" y="10.500" width="4" height="1" fill="#b0b0b0"/></g>
<g transform="translate(961.4,212.0)"><rect x="1" y="3" width="14.500" height="10.500" fill="#f2f2f2"/><path d="M4 8.500l2-3 2 3z" fill="#7a7a7a"/><path d="M9 5.500h4l-2 3z" fill="#b04040"/><rect x="3" y="10.500" width="10" height="1.200" fill="#b0b0b0"/></g>
<g transform="translate(800.5,231.5)"><rect x="1" y="1" width="13.500" height="14" fill="#f2f2f2"/><rect x="1" y="1" width="13.500" height="2.500" fill="#5b8fd0"/><rect x="3" y="5" width="1.500" height="1.500" fill="#c08040"/><rect x="3" y="8" width="1.500" height="1.500" fill="#c08040"/><rect x="3" y="11" width="1.500" height="1.500" fill="#c08040"/><path d="M7.500 9.500h8l-3 3v3.500h-2v-3.500z" fill="#8c8c8c"/></g>
<g transform="translate(823.6,231.5)"><rect x="1.500" y="1" width="13.500" height="14.500" fill="#f2f2f2"/><rect x="1.500" y="1" width="13.500" height="3" fill="#6f9fd8"/><path d="M1.500 7.500h13.500M1.500 11.300h13.500M6 1v14.500M10.500 1v14.500" stroke="#4a4a4a" stroke-width="1"/></g>
<g transform="translate(846.6,231.5)"><rect x="1.500" y="1" width="13.500" height="14.500" fill="#d8d8d8"/><rect x="1.500" y="1" width="13.500" height="3" fill="#6f9fd8"/><rect x="1.500" y="4" width="4.500" height="11.500" fill="#f2f2f2"/><path d="M1.500 7.500h13.500M1.500 11.300h13.500M6 1v14.500M10.500 1v14.500" stroke="#4a4a4a" stroke-width="1"/></g>
<g transform="translate(869.8,231.5)"><text x="8.300" y="14.800" font-family="Liberation Sans,sans-serif" font-size="18.500" fill="#9db8d8" stroke="#9db8d8" stroke-width=".7" text-anchor="middle" textLength="11" lengthAdjust="spacingAndGlyphs">R</text></g>
<g transform="translate(892.7,231.5)"><circle cx="3.200" cy="7" r="1.100" fill="#e8e8e8"/><circle cx="8" cy="7" r="1.100" fill="#e8e8e8"/><circle cx="12.800" cy="7" r="1.100" fill="#e8e8e8"/></g>
<g fill="none" stroke="#e6e6e6" stroke-width="1.100"><path d="M811 277.700h12.500"/><rect x="810.800" y="280" width="16" height="5.500" stroke-dasharray="1.500 1"/><rect x="810.800" y="287.500" width="16" height="5.300" stroke-dasharray="1.500 1"/></g>
<g fill="none" stroke="#f2f2f2" stroke-width="1.200"><rect x="844.500" y="277.500" width="12" height="3.800" rx="1"/><path d="M856.500 279.500h2.500v4.500h-7.500v2.500"/><rect x="850" y="286.500" width="3" height="6.500" rx=".6"/></g>
<g fill="none" stroke="#e6e6e6" stroke-width="1.100"><circle cx="883" cy="284" r="6.300"/><path d="M887.500 288.500l4.500 4.500" stroke-width="1.400"/><path d="M878.500 285.500l2.500-2 2 1.500 3.500-3" stroke-width=".9"/><path d="M879.500 288.800v-2.300M881.700 289.800v-3.800M884 289.800v-3.300M886.200 288.800v-4.300" stroke-width="1.200"/></g>
<path d="M801.500 341.9l4.800 4.800 4.800-4.800" fill="none" stroke="#e0e0e0" stroke-width="1.100"/>
<rect x="962" y="343.6" width="14" height="1.600" fill="#fff"/><circle cx="980.200" cy="344.4" r="6" fill="#fff"/>
<path d="M801.500 371.3l4.800 4.800 4.800-4.800" fill="none" stroke="#e0e0e0" stroke-width="1.100"/>
<rect x="962" y="373.0" width="14" height="1.600" fill="#fff"/><circle cx="980.200" cy="373.8" r="6" fill="#fff"/>
<path d="M801.500 400.7l4.800 4.800 4.800-4.800" fill="none" stroke="#e0e0e0" stroke-width="1.100"/>
<path d="M801.500 430.1l4.800 4.800 4.800-4.800" fill="none" stroke="#e0e0e0" stroke-width="1.100"/>
<rect x="962" y="431.8" width="14" height="1.600" fill="#fff"/><circle cx="980.200" cy="432.6" r="6" fill="#fff"/>
<path d="M801.500 459.5l4.800 4.800 4.800-4.800" fill="none" stroke="#e0e0e0" stroke-width="1.100"/>
<path d="M801.500 488.9l4.800 4.800 4.800-4.800" fill="none" stroke="#e0e0e0" stroke-width="1.100"/>
<rect x="962" y="490.6" width="14" height="1.600" fill="#fff"/><circle cx="980.200" cy="491.4" r="6" fill="#fff"/>
<path d="M801.500 518.3l4.800 4.800 4.800-4.800" fill="none" stroke="#e0e0e0" stroke-width="1.100"/>
<rect x="973.500" y="520.0" width="12.500" height="1.600" fill="#fff"/><circle cx="968" cy="520.8" r="5.200" fill="none" stroke="#fff" stroke-width="1.600"/>
<path d="M801.500 547.7l4.800 4.800 4.800-4.800" fill="none" stroke="#e0e0e0" stroke-width="1.100"/>
<rect x="973.500" y="549.4" width="12.500" height="1.600" fill="#fff"/><circle cx="968" cy="550.2" r="5.200" fill="none" stroke="#fff" stroke-width="1.600"/>
<path d="M801.500 582.1l4.800-4.800 4.800 4.800" fill="none" stroke="#e0e0e0" stroke-width="1.100"/>
<rect x="962" y="578.8" width="14" height="1.600" fill="#fff"/><circle cx="980.200" cy="579.6" r="6" fill="#fff"/>
</svg>
<div style="left:794px;top:593.500px;width:198px;height:1px;background:#3a3a3a"></div>
<span class="t" style="left:801.500px;top:602.600px;color:#fff;font-size:9.800px">Color</span>
<div style="left:948px;top:599px;width:36px;height:19px;border:1px solid #2e2e2e;background:#444"></div>
<div style="left:952.500px;top:603.500px;width:10px;height:10px;background:#000"></div>
<svg style="left:967px;top:607px" width="6" height="4" viewBox="0 0 6 4"><path d="M0 0h6L3 3.600z" fill="#8a8a8a"/></svg>
<span class="t" style="left:801.500px;top:636px;color:#e8b43a;font-size:9.800px">Revert to default</span>
<svg style="left:794px;top:562px" width="203" height="90" viewBox="794 562 203 90"><rect x="796.200" y="564.200" width="197.600" height="84.400" fill="none" stroke="#f1e22c" stroke-width="2.500"/></svg>
<svg style="left:1006.800px;top:144px" width="8" height="12" viewBox="0 0 8 12"><path d="M6.500 1l-5 5 5 5" fill="none" stroke="#d0d0d0" stroke-width="1.100"/></svg>
<span class="t" style="left:1010px;top:200px;color:#fff;font-weight:bold;font-size:10.800px;transform:translate(-50%,-50%) rotate(90deg)">FIELDS</span>
<!-- side icons -->
<div style="left:1px;top:130px;width:2px;height:34px;background:#f2c43c"></div>
<svg style="left:0;top:0" width="40" height="240" viewBox="0 0 40 240">
<rect x="11.200" y="141.500" width="14.500" height="14" fill="none" stroke="#fff" stroke-width="1.300"/><rect x="14" y="147" width="2.200" height="6.500" fill="#fff"/><rect x="17.500" y="150" width="2.200" height="3.500" fill="#fff"/><rect x="21" y="145" width="2.200" height="8.500" fill="#fff"/>
<g stroke="#9a9a9a" fill="none" stroke-width="1"><rect x="11.500" y="174.500" width="14" height="16"/><path d="M11.500 182.500h14M11.500 186.500h14M16.200 178.500v12M20.800 178.500v12"/></g><rect x="11" y="174" width="15" height="4.500" fill="#9a9a9a"/>
<g stroke="#9a9a9a" fill="none" stroke-width="1"><rect x="11.500" y="214.500" width="6" height="5"/><rect x="20.500" y="209.500" width="5.500" height="5"/><rect x="20.500" y="218.500" width="5.500" height="5"/><path d="M17.500 217h1.500v-5h1.500M19 217v4h1.500"/></g><path d="M11.500 215h6M20.500 210h5.500M20.500 219h5.500" stroke="#9a9a9a" stroke-width="1.600"/>
</svg>
<!-- page tabs content -->
<svg style="left:39.500px;top:636px" width="18" height="9" viewBox="0 0 18 9"><path d="M4.500 1.500L1.200 4.500 4.500 7.500z" fill="#cfcfcf"/><path d="M13.500 1.500l3.300 3L13.500 7.500z" fill="#cfcfcf"/></svg>
<div style="left:63px;top:626px;width:1px;height:25px;background:#bdbdbd"></div>
<div style="left:145px;top:626px;width:109px;height:25px;background:#fff"></div>
<div style="left:145px;top:628px;width:1px;height:23px;background:#d4d4d4"></div>
<span class="t c" style="left:105.500px;top:634.500px;color:#757575;font-size:9.100px">PIE CHART</span>
<span class="t c" style="left:200.500px;top:634.500px;color:#757575;font-size:9.100px">COLUMN CHART</span>
<div style="left:254px;top:626px;width:32px;height:25px;background:#f2c43c"></div>
<svg style="left:264.400px;top:634.400px" width="10" height="10" viewBox="0 0 10 10"><path d="M5 .5v9M.5 5h9" stroke="#666" stroke-width="2.400"/></svg>
<div style="left:1022px;top:130px;width:2px;height:521px;background:#1f6c9c"></div>
</div>
</body>
</html>
